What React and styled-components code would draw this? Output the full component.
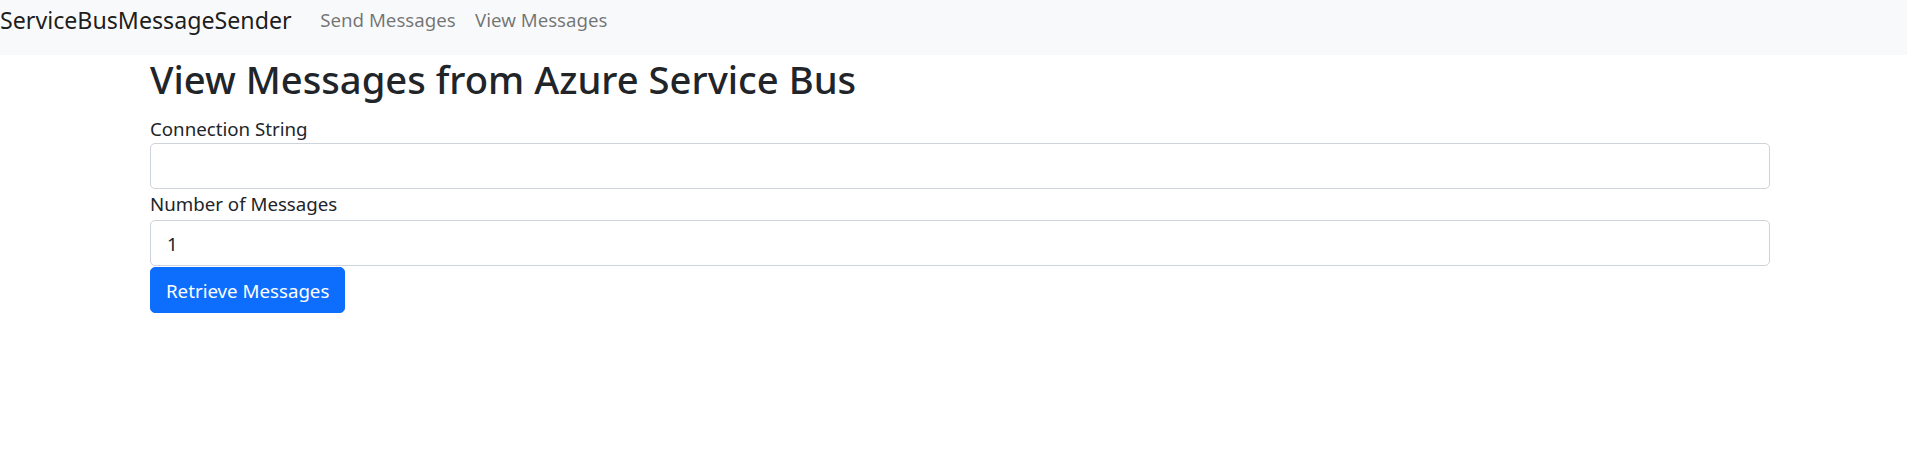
import React from "react";
import styled, { createGlobalStyle } from "styled-components";

const GlobalStyle = createGlobalStyle`
  html, body { margin: 0; padding: 0; background: #fff; }
  body {
    font-family: "Noto Sans", "Open Sans", sans-serif;
    font-size: 18.7px;
    line-height: 1.54;
    color: #212529;
  }
  * { box-sizing: border-box; }
`;

const Navbar = styled.nav`
  height: 55px;
  background: #f8f9fa;
  display: flex;
  align-items: flex-start;
`;

const Brand = styled.a`
  font-size: 23.2px;
  line-height: 36px;
  margin-top: 2px;
  margin-right: 19px;
  color: rgba(0, 0, 0, 0.9);
  text-decoration: none;
  white-space: nowrap;
`;

const NavList = styled.ul`
  display: flex;
  list-style: none;
  margin: 0;
  padding: 0;
  margin-top: 6px;
`;

const NavLink = styled.a`
  display: block;
  padding: 0 9.6px;
  line-height: 28.8px;
  color: rgba(0, 0, 0, 0.55);
  text-decoration: none;
  white-space: nowrap;
`;

const Main = styled.main`
  padding-left: 150px;
  width: 1770px;
`;

const Title = styled.h1`
  margin: 1px 0 12px;
  font-size: 38.2px;
  line-height: 46px;
  font-weight: 500;
  color: #212529;
`;

const Form = styled.form`
  display: flex;
  flex-direction: column;
  align-items: flex-start;
`;

const Label = styled.label`
  display: block;
  height: ${(p) => p.h}px;
  line-height: 29px;
`;

const Input = styled.input`
  display: block;
  width: 100%;
  height: 46px;
  padding: 0 15px 0 16px;
  font-family: inherit;
  font-size: 18.7px;
  color: #212529;
  background: #fff;
  border: 1px solid #ced4da;
  border-radius: 5px;
  outline: none;
`;

const Button = styled.button`
  margin-top: 1px;
  height: 46px;
  padding: 0 15px;
  font-family: inherit;
  font-size: 18.7px;
  color: #fff;
  background: #0d6efd;
  border: 1px solid #0d6efd;
  border-radius: 5px;
  cursor: pointer;
`;

export default function App() {
  return (
    <>
      <GlobalStyle />
      <Navbar>
        <Brand href="#">ServiceBusMessageSender</Brand>
        <NavList>
          <li><NavLink href="#">Send Messages</NavLink></li>
          <li><NavLink href="#">View Messages</NavLink></li>
        </NavList>
      </Navbar>
      <Main>
        <Title>View Messages from Azure Service Bus</Title>
        <Form onSubmit={(e) => e.preventDefault()}>
          <Label h={29} htmlFor="conn">Connection String</Label>
          <Input id="conn" type="text" defaultValue="" />
          <Label h={31} htmlFor="count">Number of Messages</Label>
          <Input id="count" type="number" defaultValue="1" />
          <Button type="submit">Retrieve Messages</Button>
        </Form>
      </Main>
    </>
  );
}
